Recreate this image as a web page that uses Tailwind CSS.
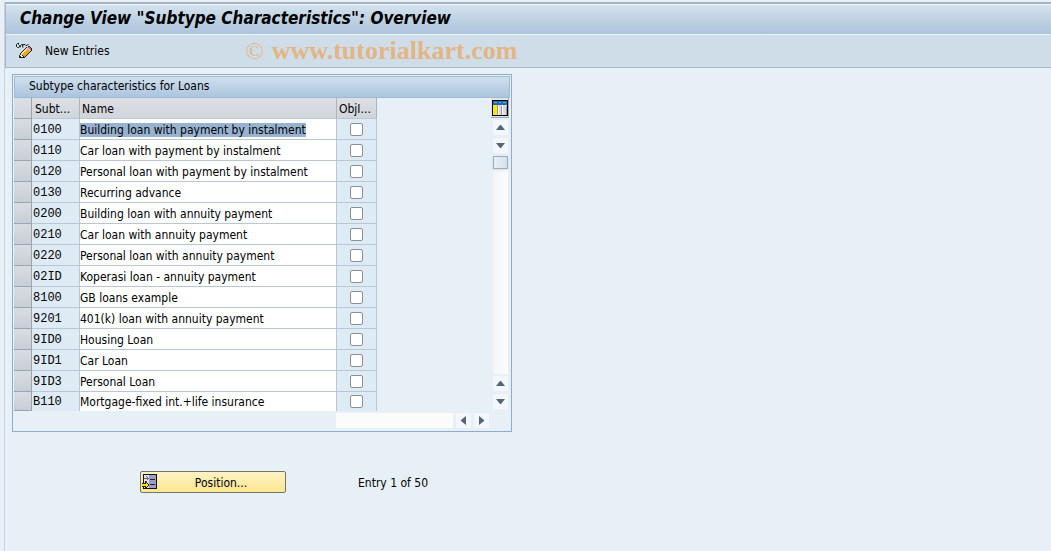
<!DOCTYPE html>
<html lang="en">
<head>
<meta charset="utf-8">
<meta name="viewport" content="width=device-width, initial-scale=1">
<title>Change View "Subtype Characteristics": Overview</title>
<script src="https://cdn.jsdelivr.net/npm/@tailwindcss/browser@4"></script>
</head>
<body class="min-h-screen bg-[#e8eff7] pt-[2px] pl-1 font-['Tahoma','DejaVu_Sans_Condensed','Noto_Sans',sans-serif] text-[12px] leading-4 text-black">
<div class="min-h-[549px] border-l border-[#c5d3df] bg-[#e8f0f7]">
  <header class="border-t-2 border-b border-l border-t-[#a3b2c3] border-b-[#a6b7c6] border-l-[#a6b7c6]">
    <h1 class="flex h-[31px] items-center border-y border-[#eef3fa] bg-linear-to-b from-[#d3e2ef] via-[#bfd2e2] to-[#adc4df] pb-1 pl-[14px] text-[17px] leading-5 font-bold italic">Change View "Subtype Characteristics": Overview</h1>
    <div class="flex h-8 items-center bg-[#cfdde8]">
      <button class="ml-[10px] size-4" aria-label="Display or change">
        <svg class="size-4" viewBox="0 0 16 16">
          <path fill="none" stroke="#111" d="M3 .5H1.500L.5 1.500v2l1 1h1l1-1v-1l-1-1M4 4.500l.5-2 1-1h1V3l.5 1.500M6.500 3l1-1.500h1.500l1 1h1l1.500-1.500"/>
          <path fill="#222" shape-rendering="crispEdges" d="M12 3h2v1h1v1h1v3h-1v1h-1v1h-1v1h-1v1h-1v1h-1v1H9v1H3v-3h1v-2h1V9h1V8h1V7h1V6h1V5h1V4h2z"/>
          <path fill="#f6a21d" shape-rendering="crispEdges" d="M10 5h1v1h1v1h1v1h1v1h-1v1h-1v1h-1v1h-1v1H9v1H8v-1H7v-1H6v-1H5v-1h1V9h1V8h1V7h1V6h1z"/>
          <path fill="#ffe9a6" shape-rendering="crispEdges" d="M10 5h1v2h-1v1H9v1H8v1H7v1H6v1H5v-2h1V9h1V8h1V7h1V6h1z"/>
          <path fill="#fff" shape-rendering="crispEdges" d="M4 12h2v1h1v1H5v-1H4z"/>
          <path fill="#b7c6ea" shape-rendering="crispEdges" d="M11 4h1v1h1v1h1v1h1v1h-2V7h-1V6h-1z"/>
          <path fill="#de6259" shape-rendering="crispEdges" d="M12 4h2v1h1v2h-1V6h-1V5h-1z"/>
        </svg>
      </button>
      <button class="ml-[13px]">New Entries</button>
      <div class="ml-[136px] flex items-center gap-2 text-[#e3b585] font-['Liberation_Serif',serif]"><span class="text-[24px] leading-8">©</span><strong class="text-[26px] leading-8">www.tutorialkart.com</strong></div>
    </div>
  </header>

  <main class="pl-[7px] pt-[6px]">
    <section class="w-[500px] border border-[#8facc8] p-px pb-[3px]">
      <h2 class="h-[22px] border border-[#9fbad1] bg-linear-to-b from-[#d0e0ed] to-[#acc4de] pt-px pl-[14px]">Subtype characteristics for Loans</h2>
      <div class="flex items-start justify-between">
        <table class="w-[363px] table-fixed border-separate border-spacing-0 text-left">
          <colgroup><col class="w-[18px]"><col class="w-12"><col><col class="w-10"></colgroup>
          <thead>
            <tr class="h-[21px] bg-linear-to-b from-[#dcdfe4] to-[#d0d5db]">
              <th class="border-r border-b border-[#9aa5b3] p-0"></th>
              <th class="border-r border-b border-r-[#a9b5c2] border-b-[#b9c7d4] pt-[2px] pr-0 pb-0 pl-[3px] font-normal">Subt...</th>
              <th class="border-r border-b border-r-[#a9b5c2] border-b-[#b9c7d4] pt-[2px] pr-0 pb-0 pl-[2px] font-normal">Name</th>
              <th class="border-r border-b border-r-[#a9b5c2] border-b-[#b9c7d4] pt-[2px] pr-0 pb-0 pl-[2px] font-normal">ObjI...</th>
            </tr>
          </thead>
          <tbody id="rows"></tbody>
        </table>
        <div class="flex w-[19px] flex-col items-start">
          <button class="flex h-5 w-[18px] items-center justify-center border-r border-b border-[#9ba8b5] bg-[#dfe3e7]" aria-label="Configure columns">
            <svg class="size-4 shrink-0" viewBox="0 0 16 16" shape-rendering="crispEdges">
              <path fill="#000" d="M0 0h16v16H0z"/><path fill="#f4f6fa" d="M1 1h14v14H1z"/>
              <path fill="#1c68b4" d="M1 1h14v4H1z"/><path fill="#69a6da" d="M2 2h3v1H2zM7 2h2v1H7zM11 2h3v1h-3z"/>
              <path fill="#ffe800" d="M1 5h4v10H1z"/><path fill="#9b9b9b" d="M5 5h1v10H5zM9 6h1v9H9zM14 6h1v9h-1z"/><path fill="#d6dae4" d="M7 5h2v10H7zM11 5h3v10h-3z"/><path fill="#fff" d="M6 5h1v10H6zM10 5h1v10h-1z"/>
            </svg>
          </button>
          <div class="flex flex-col pt-[2px] pl-[2px]">
            <button class="flex size-[15px] items-center justify-center bg-[#f3f6fb]" aria-label="Scroll up"><svg class="h-[5px] w-[9px]" viewBox="0 0 9 5"><path fill="#51677a" d="M0 5 4 0h1l4 5z"/></svg></button>
            <button class="mt-[3px] flex size-[15px] items-center justify-center bg-[#f3f6fb]" aria-label="Scroll down"><svg class="h-[5px] w-[9px]" viewBox="0 0 9 5"><path fill="#51677a" d="M0 0h9L5 5H4z"/></svg></button>
            <div class="mt-[3px] flex h-[218px] w-[15px] flex-col bg-linear-to-r from-[#f5f5f5] to-[#fdfdfd]">
              <div class="h-[13px] border border-[#9daebb] bg-linear-to-r from-[#e7eff5] to-[#d2e0eb] shadow"></div>
            </div>
            <button class="mt-[2px] flex size-[15px] items-center justify-center bg-[#f3f6fb]" aria-label="Scroll to previous"><svg class="h-[5px] w-[9px]" viewBox="0 0 9 5"><path fill="#51677a" d="M0 5 4 0h1l4 5z"/></svg></button>
            <button class="mt-[3px] flex size-[15px] items-center justify-center bg-[#f3f6fb]" aria-label="Scroll to next"><svg class="h-[5px] w-[9px]" viewBox="0 0 9 5"><path fill="#51677a" d="M0 0h9L5 5H4z"/></svg></button>
          </div>
        </div>
      </div>
      <div class="mt-[2px] flex justify-end gap-[3px] pr-[21px]">
        <div class="h-[15px] w-[117px] bg-[#fbfbfc]"></div>
        <button class="flex size-[15px] items-center justify-center bg-[#f3f6fb]" aria-label="Scroll left"><svg class="h-[9px] w-[5px]" viewBox="0 0 5 9"><path fill="#51677a" d="M5 0v9L0 5V4z"/></svg></button>
        <button class="flex size-[15px] items-center justify-center bg-[#f3f6fb]" aria-label="Scroll right"><svg class="h-[9px] w-[5px]" viewBox="0 0 5 9"><path fill="#51677a" d="M0 0v9l5-4V4z"/></svg></button>
      </div>
    </section>

    <div class="mt-[39px] ml-32 flex items-center">
      <button class="flex h-[22px] w-[146px] items-center rounded-[2px] border border-[#77746a] bg-linear-to-b from-[#fdf3c4] to-[#fce68f] pl-px">
        <svg class="size-4 shrink-0" viewBox="0 0 16 16" shape-rendering="crispEdges">
          <path fill="#111" d="M1 0h14v15H1z"/><path fill="#e2e4f0" d="M2 1h5v13H2z"/><path fill="#9c9dcb" d="M7 1h7v13H7z"/>
          <path fill="none" stroke="#222" d="M8 5.500h5M8 10.500h5"/><path fill="none" stroke="#666" d="M2 4.500h5M5.500 3v3M4 2.500h1M3 7.500h2"/>
          <path fill="#222" d="M0 9h3V7h1v1h1v1h1v1h1v2H6v1H5v1H4v1H3v-2H0z"/><path fill="#ffe600" d="M0 10h4V9h1v1h1v2H5v1H4v-1H0z"/>
        </svg>
        <span class="grow pt-px pr-px text-center">Position...</span>
      </button>
      <span class="ml-[72px] pt-px">Entry 1 of 50</span>
    </div>
  </main>
</div>
<script>
const rows = [
  ["0100", "Building loan with payment by instalment"],
  ["0110", "Car loan with payment by instalment"],
  ["0120", "Personal loan with payment by instalment"],
  ["0130", "Recurring advance"],
  ["0200", "Building loan with annuity payment"],
  ["0210", "Car loan with annuity payment"],
  ["0220", "Personal loan with annuity payment"],
  ["02ID", "Koperasi loan - annuity payment"],
  ["8100", "GB loans example"],
  ["9201", "401(k) loan with annuity payment"],
  ["9ID0", "Housing Loan"],
  ["9ID1", "Car Loan"],
  ["9ID3", "Personal Loan"],
  ["B110", "Mortgage-fixed int.+life insurance"]
];
document.getElementById("rows").innerHTML = rows.map(([code, name], i) => {
  const last = i === rows.length - 1;
  const height = last ? "h-[19px]" : "h-[21px]";
  const line = last ? "pt-0" : "border-b pt-[2px]";
  return `<tr class="${height}">
    <td class="border-r border-b border-[#9aa5b3] bg-linear-to-b from-[#d9dde2] to-[#c8ced6] p-0"></td>
    <td class="${line} border-r border-[#b9c7d4] bg-[#deebf5] pr-0 pb-0 pl-px font-['Liberation_Mono',monospace]">${code}</td>
    <td class="${line} border-r border-[#b9c7d4] bg-white pr-0 pb-0 pl-0 whitespace-nowrap"><span class="${i === 0 ? "bg-[#98b3d2]" : ""}">${name}</span></td>
    <td class="${last ? "" : "border-b"} border-r border-[#b9c7d4] bg-[#deebf5] p-0"><input type="checkbox" aria-label="ObjI ${code}" class="mx-auto block size-[13px] appearance-none rounded-[2px] border border-[#8f8f8f] bg-white"></td>
  </tr>`;
}).join("");
</script>
</body>
</html>
